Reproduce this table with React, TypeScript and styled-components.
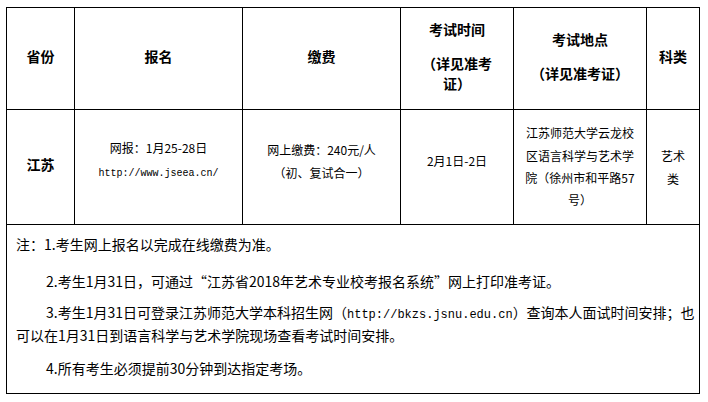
import React from "react";
import styled, { createGlobalStyle } from "styled-components";

const Global = createGlobalStyle`
  html, body { margin: 0; padding: 0; background: #fff; }
  body { font-family: "Noto Sans CJK SC", "Liberation Sans", sans-serif; color: #000; }
`;

const Page = styled.div`
  padding: 7px 0 0 6px;
`;

const Table = styled.div`
  display: grid;
  grid-template-columns: 67px 167px 157px 112px 132px 52px;
  grid-template-rows: 101px 114px 168px;
  gap: 1px;
  padding: 1px;
  background: #000;
  width: fit-content;
`;

const HeadCell = styled.div<{ $px?: number }>`
  background: #fff;
  display: flex;
  flex-direction: column;
  align-items: center;
  justify-content: center;
  text-align: center;
  padding: 0 ${(p) => p.$px ?? 4}px 6px;
  font-size: 14px;
  font-weight: 700;
  line-height: 20px;
`;

const HeadLine = styled.p<{ $mt?: number }>`
  margin: ${(p) => p.$mt ?? 0}px 0 0;
`;

const Cell = styled.div<{ $px?: number; $pb?: number; $lh?: number }>`
  background: #fff;
  display: flex;
  flex-direction: column;
  align-items: center;
  justify-content: center;
  text-align: center;
  padding: 0 ${(p) => p.$px ?? 4}px ${(p) => p.$pb ?? 0}px;
  font-size: 12px;
  line-height: ${(p) => p.$lh ?? 23}px;
`;

const Province = styled(Cell)`
  font-size: 14px;
  font-weight: 700;
`;

const Line = styled.p`
  margin: 0;
`;

const Mono = styled.span<{ $size: number }>`
  font-family: "Liberation Mono", monospace;
  font-size: ${(p) => p.$size}px;
`;

const Notes = styled.div`
  grid-column: 1 / -1;
  background: #fff;
  padding: 9px 4px 0 9px;
  font-size: 14px;
  line-height: 20px;
`;

const Note = styled.p<{ $mt?: number; $indent?: boolean }>`
  margin: ${(p) => p.$mt ?? 0}px 0 0;
  text-indent: ${(p) => (p.$indent ? 30 : 0)}px;
  white-space: nowrap;
`;

export default function App() {
  return (
    <>
      <Global />
      <Page>
        <Table>
          <HeadCell>省份</HeadCell>
          <HeadCell>报名</HeadCell>
          <HeadCell>缴费</HeadCell>
          <HeadCell $px={14}>
            <HeadLine>考试时间</HeadLine>
            <HeadLine $mt={14}>（详见准考证）</HeadLine>
          </HeadCell>
          <HeadCell>
            <HeadLine>考试地点</HeadLine>
            <HeadLine $mt={14}>（详见准考证）</HeadLine>
          </HeadCell>
          <HeadCell>科类</HeadCell>

          <Province $pb={6}>江苏</Province>
          <Cell $pb={13}>
            <Line>网报：1月25-28日</Line>
            <Line>
              <Mono $size={10}>http://www.jseea.cn/</Mono>
            </Line>
          </Cell>
          <Cell $pb={13}>
            <Line>网上缴费：240元/人</Line>
            <Line>（初、复试合一）</Line>
          </Cell>
          <Cell $pb={13}>
            <Line>2月1日-2日</Line>
          </Cell>
          <Cell $px={11} $lh={22.3}>
            <Line>江苏师范大学云龙校区语言科学与艺术学院（徐州市和平路57号）</Line>
          </Cell>
          <Cell $px={9}>
            <Line>艺术类</Line>
          </Cell>

          <Notes>
            <Note>注：1.考生网上报名以完成在线缴费为准。</Note>
            <Note $indent $mt={17}>
              2.考生1月31日，可通过“江苏省2018年艺术专业校考报名系统”网上打印准考证。
            </Note>
            <Note $indent $mt={11}>
              3.考生1月31日可登录江苏师范大学本科招生网（<Mono $size={12}>http://bkzs.jsnu.edu.cn</Mono>）查询本人面试时间安排；也
              <br />
              可以在1月31日到语言科学与艺术学院现场查看考试时间安排。
            </Note>
            <Note $indent $mt={13}>4.所有考生必须提前30分钟到达指定考场。</Note>
          </Notes>
        </Table>
      </Page>
    </>
  );
}
